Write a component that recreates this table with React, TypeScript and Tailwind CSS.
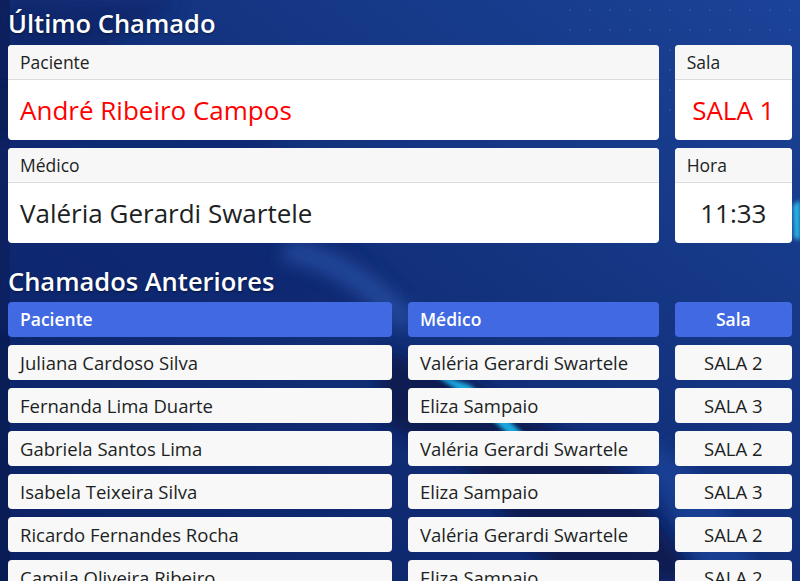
import React from "react";

const font = { fontFamily: '"Open Sans", "Noto Sans", sans-serif' };

const rows = [
  ["Juliana Cardoso Silva", "Valéria Gerardi Swartele", "SALA 2"],
  ["Fernanda Lima Duarte", "Eliza Sampaio", "SALA 3"],
  ["Gabriela Santos Lima", "Valéria Gerardi Swartele", "SALA 2"],
  ["Isabela Teixeira Silva", "Eliza Sampaio", "SALA 3"],
  ["Ricardo Fernandes Rocha", "Valéria Gerardi Swartele", "SALA 2"],
  ["Camila Oliveira Ribeiro", "Eliza Sampaio", "SALA 2"],
];

function Background() {
  return (
    <svg className="absolute inset-0 w-full h-full" viewBox="0 0 800 581" preserveAspectRatio="none">
      <defs>
        <linearGradient id="bg" x1="0" y1="1" x2="1" y2="0">
          <stop offset="0" stopColor="#0b2163" />
          <stop offset="0.5" stopColor="#12307a" />
          <stop offset="1" stopColor="#1b4398" />
        </linearGradient>
        <filter id="blur8"><feGaussianBlur stdDeviation="8" /></filter>
        <filter id="blur2"><feGaussianBlur stdDeviation="2" /></filter>
        <pattern id="dots" width="20" height="20" patternUnits="userSpaceOnUse">
          <circle cx="10" cy="10" r="1.2" fill="#3a66c0" opacity="0.5" />
        </pattern>
      </defs>
      <rect width="800" height="581" fill="url(#bg)" />
      <rect x="560" y="0" width="240" height="120" fill="url(#dots)" opacity="0.7" />
      <rect x="0" y="0" width="10" height="581" fill="#081a4e" opacity="0.7" />
      <path d="M0 0 L180 0 L90 60 L0 80 Z" fill="#0a2264" opacity="0.6" filter="url(#blur8)" />
      <path d="M0 140 L260 120 L400 300 L0 330 Z" fill="#0d276f" opacity="0.6" filter="url(#blur8)" />
      <path d="M290 240 Q360 250 420 320 L400 330 Q340 270 280 260 Z" fill="#2a53a8" opacity="0.7" filter="url(#blur8)" />
      <path d="M380 350 L470 380 L620 470 L700 581 L560 581 L470 470 L380 420 Z" fill="#071544" opacity="0.75" filter="url(#blur8)" />
      <path d="M430 372 L470 385 L530 440 L520 445 L465 395 Z" fill="#1fb8f0" opacity="0.9" filter="url(#blur2)" />
      <path d="M650 440 Q720 480 760 581 L700 581 Q680 510 640 470 Z" fill="#1e4aa3" opacity="0.6" filter="url(#blur8)" />
      <path d="M793 205 L800 200 L800 240 L794 238 Z" fill="#2fc8f5" opacity="0.9" filter="url(#blur2)" />
    </svg>
  );
}

function InfoCard({ label, value, valueClass }: { label: string; value: string; valueClass: string }) {
  return (
    <div className="bg-white rounded-[4px] overflow-hidden flex flex-col h-[95px]">
      <div className="bg-[#f7f7f7] border-b border-[#dcdcdc] h-[35px] px-3 flex items-center text-[17.5px] text-[#1c1f23]">
        {label}
      </div>
      <div className={"flex-1 px-3 flex items-center text-[26px] " + valueClass}>{value}</div>
    </div>
  );
}

export default function App() {
  return (
    <div className="relative w-[800px] h-[581px] overflow-hidden" style={font}>
      <Background />
      <div className="relative px-2">
        <h1 className="text-white text-[25.5px] font-semibold leading-[32px] pt-[7px] mb-[6px] [text-shadow:0_1px_2px_rgba(0,0,0,0.5)]">
          Último Chamado
        </h1>
        <div className="grid grid-cols-12 gap-x-4 gap-y-2">
          <div className="col-span-10">
            <InfoCard label="Paciente" value="André Ribeiro Campos" valueClass="text-[#ff0000]" />
          </div>
          <div className="col-span-2">
            <InfoCard label="Sala" value="SALA 1" valueClass="text-[#ff0000] justify-center" />
          </div>
          <div className="col-span-10">
            <InfoCard label="Médico" value="Valéria Gerardi Swartele" valueClass="text-[#1c1f23]" />
          </div>
          <div className="col-span-2">
            <InfoCard label="Hora" value="11:33" valueClass="text-[#1c1f23] justify-center" />
          </div>
        </div>
        <h2 className="text-white text-[25.5px] font-semibold leading-[32px] mt-[22px] mb-[5px] [text-shadow:0_1px_2px_rgba(0,0,0,0.5)]">
          Chamados Anteriores
        </h2>
        <div className="grid grid-cols-12 gap-x-4 gap-y-2">
          <div className="col-span-6 h-[35px] rounded-[4px] bg-[#4169e1] text-white font-semibold text-[17.5px] px-3 flex items-center">Paciente</div>
          <div className="col-span-4 h-[35px] rounded-[4px] bg-[#4169e1] text-white font-semibold text-[17.5px] px-3 flex items-center">Médico</div>
          <div className="col-span-2 h-[35px] rounded-[4px] bg-[#4169e1] text-white font-semibold text-[17.5px] px-3 flex items-center justify-center">Sala</div>
          {rows.map((r, i) => (
            <React.Fragment key={i}>
              <div className="col-span-6 h-[35px] rounded-[4px] bg-[#f8f8f8] text-[#1c1f23] text-[18.5px] px-3 flex items-center">{r[0]}</div>
              <div className="col-span-4 h-[35px] rounded-[4px] bg-[#f8f8f8] text-[#1c1f23] text-[18.5px] px-3 flex items-center">{r[1]}</div>
              <div className="col-span-2 h-[35px] rounded-[4px] bg-[#f8f8f8] text-[#1c1f23] text-[18.5px] px-3 flex items-center justify-center">{r[2]}</div>
            </React.Fragment>
          ))}
        </div>
      </div>
    </div>
  );
}
